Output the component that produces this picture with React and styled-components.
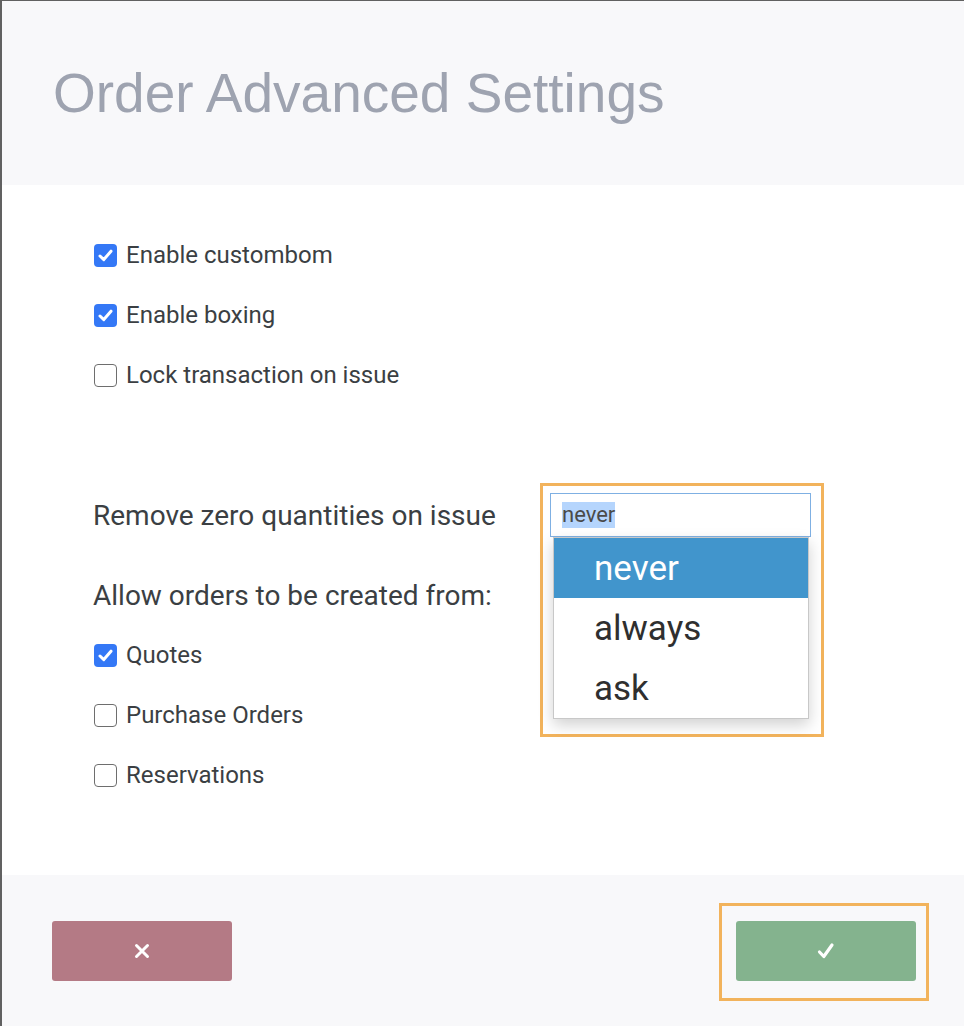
import React from "react";
import styled, { createGlobalStyle } from "styled-components";

const Global = createGlobalStyle`
  html, body { margin: 0; padding: 0; background: #ffffff; }
  body { font-family: Roboto, "Noto Sans", sans-serif; }
  * { box-sizing: border-box; }
`;

const Dialog = styled.div`
  width: 964px;
  height: 1026px;
  border-left: 2px solid #616161;
  border-top: 1px solid #616161;
  display: flex;
  flex-direction: column;
  background: #ffffff;
`;

const Header = styled.header`
  height: 184px;
  background: #f8f8fa;
  display: flex;
  align-items: center;
  padding-left: 51px;
`;

const Title = styled.h1`
  margin: 0;
  font-family: "Liberation Sans", Arial, sans-serif;
  font-weight: 400;
  font-size: 55px;
  color: #9ea3b0;
`;

const Body = styled.main`
  flex: 1;
  padding: 40px 0 0 91px;
  display: flex;
  flex-direction: column;
`;

const Row = styled.label`
  height: 60px;
  display: flex;
  align-items: center;
  gap: 9px;
  font-size: 24px;
  color: #3b3f43;
`;

const Box = styled.span`
  width: 23px;
  height: 23px;
  border-radius: 4px;
  display: flex;
  align-items: center;
  justify-content: center;
  background: ${(p) => (p.$checked ? "#3478f6" : "#ffffff")};
  border: ${(p) => (p.$checked ? "none" : "1.5px solid #6e6e6e")};
  margin-left: 1px;
`;

const Spacer = styled.div`
  height: ${(p) => p.$h}px;
`;

const TextRow = styled.div`
  height: 60px;
  display: flex;
  align-items: center;
  font-size: 28px;
  color: #3b3f43;
`;

const SelectRow = styled.div`
  height: 60px;
  display: grid;
  grid-template-columns: 457px 261px;
  align-items: center;
  font-size: 28px;
  color: #3b3f43;
`;

const SelectField = styled.div`
  position: relative;
  width: 261px;
  height: 44px;
  border: 1px solid #7fb0e3;
  background: #fff;
  display: flex;
  align-items: center;
  padding-left: 11px;
  font-size: 22px;
  color: #4a4a4a;
`;

const Selected = styled.span`
  background: #b5d5fd;
  line-height: 26px;
`;

const Frame = styled.div`
  position: absolute;
  border: 3px solid #f2b35c;
  pointer-events: none;
  left: ${(p) => p.$l}px;
  top: ${(p) => p.$t}px;
  width: ${(p) => p.$w}px;
  height: ${(p) => p.$h}px;
`;

const Menu = styled.ul`
  position: absolute;
  list-style: none;
  margin: 0;
  padding: 0;
  left: 2px;
  top: 43px;
  width: 256px;
  background: #fff;
  border: 1px solid #c8c8c8;
  box-shadow: 0 6px 14px rgba(0, 0, 0, 0.18);
  z-index: 2;
`;

const Option = styled.li`
  height: 60px;
  display: flex;
  align-items: center;
  padding-left: 40px;
  font-size: 35px;
  color: ${(p) => (p.$active ? "#ffffff" : "#2f2f2f")};
  background: ${(p) => (p.$active ? "#4195cc" : "#ffffff")};
`;

const Footer = styled.footer`
  height: 151px;
  background: #f8f8fa;
  display: flex;
  justify-content: space-between;
  align-items: flex-start;
  padding: 46px 48px 0 50px;
`;

const Button = styled.button`
  position: relative;
  width: 180px;
  height: 60px;
  border: none;
  border-radius: 3px;
  background: ${(p) => p.$bg};
  display: flex;
  align-items: center;
  justify-content: center;
  padding: 0;
  cursor: pointer;
`;

const Check = () => (
  <svg width="15" height="13" viewBox="0 0 15 13">
    <path d="M2 7 L5.8 10.6 L13 2.2" fill="none" stroke="#fff" strokeWidth="3" strokeLinecap="round" strokeLinejoin="round" />
  </svg>
);

const CheckBox = ({ checked, children }) => (
  <Row>
    <Box $checked={checked}>{checked && <Check />}</Box>
    <span>{children}</span>
  </Row>
);

export default function App() {
  return (
    <>
      <Global />
      <Dialog>
        <Header>
          <Title>Order Advanced Settings</Title>
        </Header>
        <Body>
          <CheckBox checked>Enable custombom</CheckBox>
          <CheckBox checked>Enable boxing</CheckBox>
          <CheckBox>Lock transaction on issue</CheckBox>
          <Spacer $h={80} />
          <SelectRow>
            <span>Remove zero quantities on issue</span>
            <SelectField>
              <Selected>never</Selected>
              <Menu>
                <Option $active>never</Option>
                <Option>always</Option>
                <Option>ask</Option>
              </Menu>
              <Frame $l={-11} $t={-11} $w={284} $h={254} />
            </SelectField>
          </SelectRow>
          <Spacer $h={20} />
          <TextRow>Allow orders to be created from:</TextRow>
          <CheckBox checked>Quotes</CheckBox>
          <CheckBox>Purchase Orders</CheckBox>
          <CheckBox>Reservations</CheckBox>
        </Body>
        <Footer>
          <Button $bg="#b47a85" aria-label="Cancel">
            <svg width="16" height="16" viewBox="0 0 16 16">
              <path d="M2.5 2.5 L13.5 13.5 M13.5 2.5 L2.5 13.5" stroke="#fff" strokeWidth="3" strokeLinecap="round" />
            </svg>
          </Button>
          <Button $bg="#84b38e" aria-label="Confirm">
            <svg width="20" height="20" viewBox="0 0 20 20">
              <path d="M3.5 11 L7.8 15.5 L16 4" fill="none" stroke="#fff" strokeWidth="3.2" strokeLinecap="round" strokeLinejoin="round" />
            </svg>
            <Frame $l={-17} $t={-18} $w={210} $h={98} />
          </Button>
        </Footer>
      </Dialog>
    </>
  );
}
